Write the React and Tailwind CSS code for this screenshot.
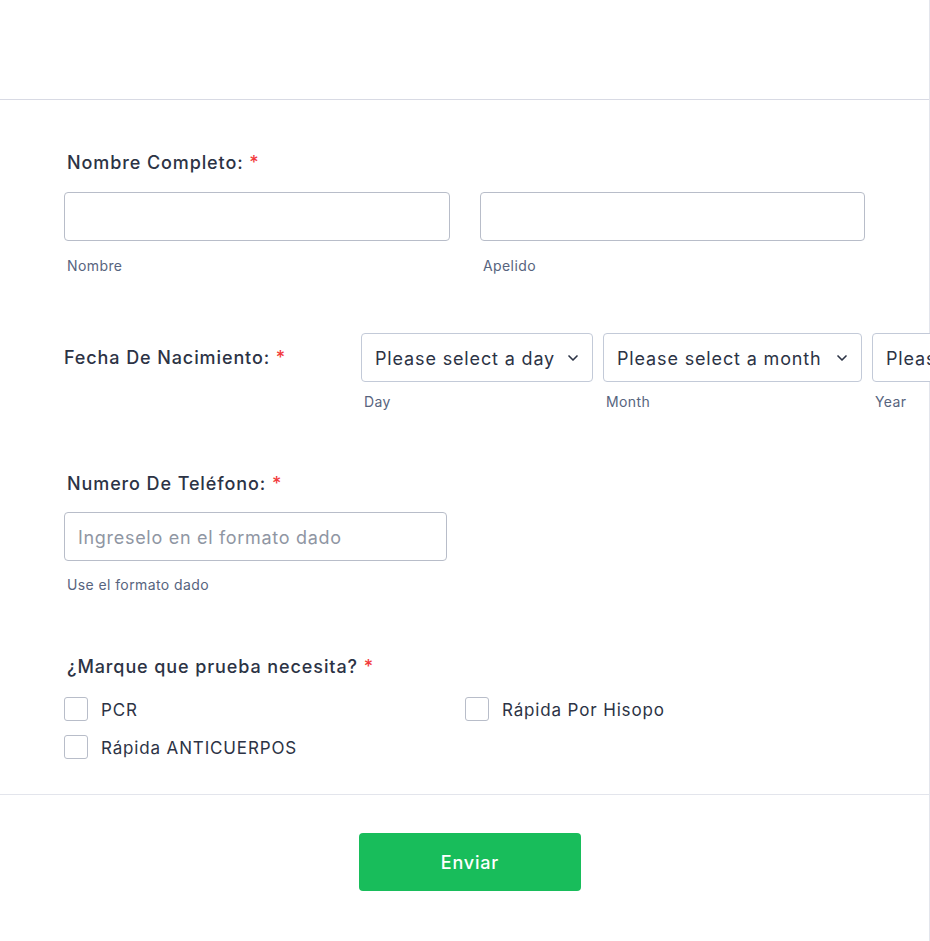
import { ChevronDown } from "lucide-react";

const font = { fontFamily: "Inter, 'Noto Sans', sans-serif" };

function Label({ children, className = "" }) {
  return (
    <div className={`text-[18px] leading-[28px] font-medium tracking-[0.9px] text-[#2c3345] whitespace-nowrap ${className}`}>
      {children} <span className="text-[#f23a3c]">*</span>
    </div>
  );
}

function Sub({ children, className = "" }) {
  return (
    <div className={`text-[14px] leading-[20px] tracking-[0.4px] text-[#57647e] pl-[3px] ${className}`}>
      {children}
    </div>
  );
}

function Select({ text, width }) {
  return (
    <div
      className={`h-[49px] ${width} shrink-0 border border-[#c3cad8] rounded-[4px] flex items-center justify-between pl-[13px] pr-[11px] pt-[1px] text-[18px] tracking-[0.85px] text-[#2c3345] bg-white`}
    >
      <span className="whitespace-nowrap">{text}</span>
      <ChevronDown size={16} strokeWidth={2.5} className="text-[#2c3345] shrink-0 ml-2" />
    </div>
  );
}

function Check({ label }) {
  return (
    <div className="flex items-center h-[24px]">
      <div className="w-[24px] h-[24px] border border-[#b8bdc9] rounded-[3px] bg-white shrink-0" />
      <span className="ml-[13px] pt-[3px] text-[17px] tracking-[0.85px] text-[#2c3345] whitespace-nowrap">{label}</span>
    </div>
  );
}

export default function App() {
  return (
    <div className="w-[930px] min-h-[941px] overflow-hidden bg-white" style={font}>
      <div className="w-[930px] border-r border-[#e3e5ec] min-h-[941px]">
        {/* header */}
        <div className="h-[100px] border-b border-[#d8dae4]" />

        <div className="pl-[64px] pt-[49px]">
          {/* nombre completo */}
          <Label className="pl-[3px]">Nombre Completo:</Label>
          <div className="flex gap-[30px] mt-[15px]">
            <div className="w-[386px]">
              <div className="h-[49px] border border-[#b8bdc9] rounded-[4px]" />
              <Sub className="mt-[15px]">Nombre</Sub>
            </div>
            <div className="w-[385px]">
              <div className="h-[49px] border border-[#b8bdc9] rounded-[4px]" />
              <Sub className="mt-[15px]">Apelido</Sub>
            </div>
          </div>

          {/* fecha */}
          <div className="flex mt-[57px]">
            <div className="w-[297px] shrink-0 h-[49px] flex items-center pt-[1px]">
              <Label>Fecha De Nacimiento:</Label>
            </div>
            <div className="flex gap-[10px]">
              <div>
                <Select text="Please select a day" width="w-[232px]" />
                <Sub className="mt-[10px]">Day</Sub>
              </div>
              <div>
                <Select text="Please select a month" width="w-[259px]" />
                <Sub className="mt-[10px]">Month</Sub>
              </div>
              <div>
                <Select text="Please select a year" width="w-[232px]" />
                <Sub className="mt-[10px]">Year</Sub>
              </div>
            </div>
          </div>

          {/* telefono */}
          <Label className="pl-[3px] mt-[58px]">Numero De Teléfono:</Label>
          <div className="w-[383px] mt-[14px]">
            <div className="h-[49px] border border-[#b8bdc9] rounded-[4px] flex items-center pl-[13px] pt-[1px] text-[18px] tracking-[0.7px] text-[#8f96a3]">
              Ingreselo en el formato dado
            </div>
            <Sub className="mt-[14px]">Use el formato dado</Sub>
          </div>

          {/* prueba */}
          <Label className="pl-[3px] mt-[58px]">¿Marque que prueba necesita?</Label>
          <div className="grid grid-cols-[401px_1fr] gap-y-[14px] mt-[16px]">
            <Check label="PCR" />
            <Check label="Rápida Por Hisopo" />
            <Check label="Rápida ANTICUERPOS" />
          </div>
        </div>

        {/* footer */}
        <div className="mt-[35px] border-t border-[#e3e5ec] flex justify-center pt-[38px] pl-[11px]">
          <button className="w-[222px] h-[58px] bg-[#18bd5b] rounded-[4px] text-white text-[18px] tracking-[0.8px] font-medium">
            Enviar
          </button>
        </div>
      </div>
    </div>
  );
}
